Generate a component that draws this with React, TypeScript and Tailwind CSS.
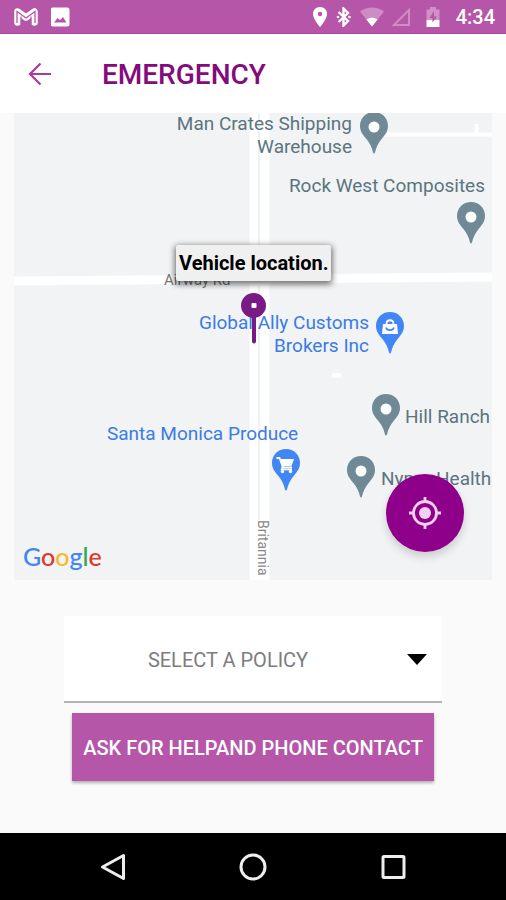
import type { ReactNode } from "react";

function StatusBar() {
  return (
    <header className="flex h-[34px] items-center justify-between bg-[#b556a8] pl-[13px] pr-[11px] text-white shadow-[inset_0_-1px_0_#a743a0]">
      <div className="flex items-center gap-3">
        <svg className="h-5 w-[26px]" viewBox="0 0 26 20" fill="none" aria-label="Gmail">
          <path d="M4.500 15.500V4.500L13 10.500L21.500 4.500V15.500" stroke="#fff" strokeWidth="6.500" strokeLinejoin="round" strokeLinecap="round" />
          <path d="M4 16V4.500L13 11L22 4.500V16" stroke="#b556a8" strokeWidth="1.300" />
          <path d="M8 9.500V17M18 9.500V17" stroke="#b556a8" strokeWidth="1.200" />
        </svg>
        <svg className="h-5 w-5" viewBox="0 0 20 20" aria-label="Image">
          <rect x="-0.500" y="0.500" width="19" height="19" rx="2.500" fill="#fff" />
          <path d="M3 15.500L6.500 11L9 13L12 10L15.500 15.500Z" fill="#b556a8" />
        </svg>
      </div>
      <div className="flex items-center gap-2">
        <svg className="h-5 w-4" viewBox="0 0 16 20" aria-label="Location">
          <path d="M8 0C3.800 0 1 3.200 1 7C1 12 8 20 8 20S15 12 15 7C15 3.200 12.200 0 8 0Z" fill="#fff" />
          <circle cx="8" cy="7" r="2.200" fill="#b556a8" />
        </svg>
        <svg className="h-5 w-4" viewBox="0 0 16 20" fill="none" aria-label="Bluetooth">
          <path d="M2.500 5L12 14L7.500 18.500V1.500L12 6L2.500 15" stroke="#fff" strokeWidth="2.400" />
          <circle cx="2" cy="10" r="1.300" fill="#fff" />
          <circle cx="13.500" cy="10" r="1.300" fill="#fff" />
        </svg>
        <svg className="h-5 w-6" viewBox="0 0 24 20" aria-label="Wi-Fi">
          <path d="M0 4.500C7 -1 17 -1 24 4.500L12 19.500Z" fill="#fff" fillOpacity="0.320" />
          <path d="M6.500 12.500C9.500 10.300 14.500 10.300 17.500 12.500L12 19.500Z" fill="#fff" />
        </svg>
        <svg className="h-5 w-[18px]" viewBox="0 0 18 20" fill="none" aria-label="Mobile signal">
          <path d="M2 18L17 3V18Z" stroke="#fff" strokeOpacity="0.320" strokeWidth="2" />
        </svg>
        <svg className="ml-2 h-5 w-[14px]" viewBox="0 0 14 20" aria-label="Battery">
          <path d="M4 0H10V2.500H13.500V13H.5V2.500H4Z" fill="#fff" fillOpacity="0.350" />
          <path d="M.5 13H13.500V20H.5Z" fill="#fff" />
          <path d="M8 4L3.500 11H6.500V15.500L11 9.500H8Z" fill="#b556a8" />
        </svg>
        <span className="ml-2 text-[20px] font-medium leading-6">4:34</span>
      </div>
    </header>
  );
}

function Pin({ place, color, children }: { place: string; color: string; children?: ReactNode }) {
  return (
    <svg className={`absolute h-[42px] w-7 ${place}`} viewBox="0 0 28 42" fill="none">
      <path d="M14 0C6 0 0 6 0 14C0 19 2.500 22.500 6 26.500C10 31 12 36 13 40.500Q14 42.500 15 40.500C16 36 18 31 22 26.500C25.500 22.500 28 19 28 14C28 6 22 0 14 0Z" fill={color} />
      {children ?? <circle cx="14" cy="15" r="5.500" fill="#fff" />}
    </svg>
  );
}

function Label({ place, children }: { place: string; children: ReactNode }) {
  return <p className={`absolute whitespace-nowrap text-[19px] leading-[23px] ${place}`}>{children}</p>;
}

function VehicleMap() {
  return (
    <section aria-label="Map" className="relative mx-[14px] h-[467px] overflow-hidden bg-[#f1f3f5]">
      <svg className="absolute inset-0 h-full w-full" viewBox="0 0 478 467" preserveAspectRatio="xMidYMid slice" fill="none">
        <path d="M0 168L478 164" stroke="#fff" strokeWidth="9" />
        <path d="M245.500 0V467" stroke="#fff" strokeWidth="20" />
        <path d="M245 0V162M245 173V407" stroke="#eef0f2" strokeWidth="2" />
        <path d="M365 21.500H478" stroke="#fff" strokeWidth="4" />
        <path d="M462.500 11V22" stroke="#fff" strokeWidth="4" />
        <ellipse cx="322.500" cy="262.500" rx="5" ry="2.500" fill="#fff" />
      </svg>

      <Label place="right-[140px] -top-px text-right text-[#5b757e]">
        Man Crates Shipping
        <br />
        Warehouse
      </Label>
      <Pin place="left-[346px] -top-px" color="#6f8a96" />
      <Label place="right-[7px] top-[61px] text-[#5b757e]">Rock West Composites</Label>
      <Pin place="left-[443px] top-[89px]" color="#6f8a96" />

      <p className="absolute left-[150px] top-[159px] text-[15px] leading-4 text-[#777]">Airway Rd</p>

      <Label place="right-[123px] top-[198px] text-right text-[#3a7be8]">
        Global Ally Customs
        <br />
        Brokers Inc
      </Label>
      <Pin place="left-[362px] top-[199px]" color="#4285f4">
        <path d="M7 12H21L22 22H6Z" fill="#fff" />
        <path d="M10.500 12C10.500 7 17.500 7 17.500 12" stroke="#fff" strokeWidth="1.800" />
        <path d="M10 15.500C11 19 17 19 18 15.500" stroke="#4285f4" strokeWidth="1.600" />
      </Pin>

      <Pin place="left-[358px] top-[281px]" color="#6f8a96" />
      <Label place="left-[391px] top-[292px] text-[#5b757e]">Hill Ranch</Label>

      <Label place="left-[93px] top-[309px] text-[#3a7be8]">Santa Monica Produce</Label>
      <Pin place="left-[258px] top-[336px]" color="#4285f4">
        <path d="M4.500 9H7.500L11 18.500H20" stroke="#fff" strokeWidth="1.800" />
        <path d="M8 10H22L19.500 17H10.500Z" fill="#fff" />
        <path d="M10.500 17.500L9.500 20.500H20" stroke="#fff" strokeWidth="1.500" />
        <circle cx="10.500" cy="22.500" r="1.700" fill="#fff" />
        <circle cx="18.500" cy="22.500" r="1.700" fill="#fff" />
      </Pin>

      <Pin place="left-[333px] top-[343px]" color="#6f8a96" />
      <Label place="left-[367px] top-[354px] text-[#5b757e]">Nypro Health</Label>

      <p className="absolute left-[241px] top-[407px] text-[14px] leading-4 text-[#888] [writing-mode:vertical-rl]">Britannia</p>

      <svg className="absolute left-[227px] top-[180px] h-[52px] w-[26px]" viewBox="0 0 26 52" aria-label="Vehicle">
        <path d="M11 22H15V49Q13 52 11 49Z" fill="#7a1a85" />
        <circle cx="12.500" cy="12.500" r="12.500" fill="#7a1a85" />
        <rect x="10.500" y="10" width="5" height="5" rx="1" fill="#fff" />
      </svg>
      <p className="absolute left-[162px] top-[132px] whitespace-nowrap rounded-[2px] bg-[#f0f0f0] px-[3px] py-[6px] text-[20px] font-bold leading-6 text-black shadow-[0_2px_6px_1px_rgba(0,0,0,0.600)]">
        Vehicle location.
      </p>

      <p aria-label="Google" className="absolute left-[9px] top-[427px] font-['Lato',sans-serif] text-[25px] font-medium leading-8">
        <span className="text-[#4285f4]">G</span>
        <span className="text-[#e0352b]">o</span>
        <span className="text-[#f9b925]">o</span>
        <span className="text-[#4285f4]">g</span>
        <span className="text-[#34a853]">l</span>
        <span className="text-[#e0352b]">e</span>
      </p>

      <button
        type="button"
        aria-label="Center on my location"
        className="absolute bottom-7 right-7 flex size-[78px] items-center justify-center rounded-full bg-[#8e0089] shadow-[0_5px_8px_rgba(0,0,0,0.160)]"
      >
        <svg className="size-8" viewBox="0 0 32 32" fill="none">
          <circle cx="16" cy="16" r="11.500" stroke="#f2d0f0" strokeWidth="2.800" />
          <circle cx="16" cy="16" r="6" fill="#f2d0f0" />
          <path d="M16 0V5M16 27V32M0 16H5M27 16H32" stroke="#f2d0f0" strokeWidth="2.800" />
        </svg>
      </button>
    </section>
  );
}

function NavBar() {
  return (
    <nav className="mt-auto flex h-[67px] items-center justify-center gap-[108px] bg-black">
      <button type="button" aria-label="Back">
        <svg className="size-8" viewBox="0 0 32 32" fill="none">
          <path d="M26.500 4.500V27.500L5.500 16Z" stroke="#eee" strokeWidth="3" strokeLinejoin="round" />
        </svg>
      </button>
      <button type="button" aria-label="Home">
        <svg className="size-8" viewBox="0 0 32 32" fill="none">
          <circle cx="16" cy="16" r="12" stroke="#eee" strokeWidth="3" />
        </svg>
      </button>
      <button type="button" aria-label="Recent apps">
        <svg className="size-8" viewBox="0 0 32 32" fill="none">
          <rect x="6" y="5.500" width="21" height="21" rx="1" stroke="#eee" strokeWidth="3" />
        </svg>
      </button>
    </nav>
  );
}

export default function App() {
  return (
    <div className="flex min-h-screen flex-col bg-[#fafafa] font-['Roboto',sans-serif]">
      <StatusBar />
      <div className="flex h-[79px] items-center gap-12 bg-white px-6">
        <button type="button" aria-label="Go back">
          <svg className="h-8 w-[30px]" viewBox="0 0 30 32" fill="none">
            <path d="M27 16H6M16.500 5.500L6 16L16.500 26.500" stroke="#a83ba2" strokeWidth="2.200" />
          </svg>
        </button>
        <h1 className="pt-0.5 text-[28px] font-medium leading-8 text-[#850b7c]">EMERGENCY</h1>
      </div>
      <main>
        <VehicleMap />
        <form className="mt-9 flex flex-col gap-[10px] px-16 pb-8">
          <div className="relative border-b-2 border-[#b5b3b5] bg-white">
            <select
              aria-label="Policy"
              className="h-[85px] w-full appearance-none bg-transparent pr-[50px] pt-[3px] text-center text-[20px] text-[#7d7d7d]"
            >
              <option>SELECT A POLICY</option>
            </select>
            <svg className="pointer-events-none absolute right-[15px] top-[38px] h-[11px] w-5" viewBox="0 0 20 11">
              <path d="M0 0H20L10 11Z" fill="#000" />
            </svg>
          </div>
          <button
            type="button"
            className="mx-2 h-[68px] whitespace-nowrap bg-[#b556a8] pt-0.5 text-[20px] font-medium text-white shadow-[0_2px_3px_rgba(0,0,0,0.300)]"
          >
            ASK FOR HELPAND PHONE CONTACT
          </button>
        </form>
      </main>
      <NavBar />
    </div>
  );
}
